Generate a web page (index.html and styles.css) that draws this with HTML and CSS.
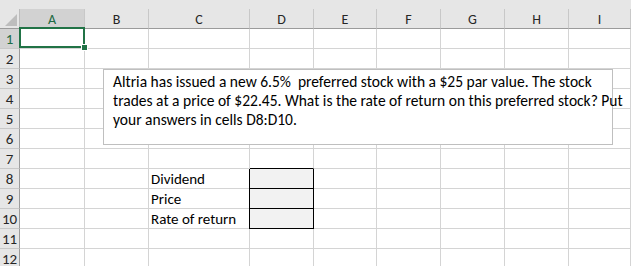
FILE: index.html
```html
<!DOCTYPE html>
<html lang="en">
<head>
  <meta charset="UTF-8">
  <title>Preferred stock</title>
  <link rel="stylesheet" href="styles.css">
</head>
<body>
  <div class="sheet">
    <div class="topband"></div>
    <div class="grid">
      <div class="corner"><span class="tri"></span></div>
      <div class="colhead sel">A</div>
      <div class="colhead">B</div>
      <div class="colhead">C</div>
      <div class="colhead">D</div>
      <div class="colhead">E</div>
      <div class="colhead">F</div>
      <div class="colhead">G</div>
      <div class="colhead">H</div>
      <div class="colhead">I</div>
    </div>
    <div class="grid" id="rows"></div>

    <div class="selection"><span class="handle"></span></div>

    <div class="textbox">
      Altria has issued a new 6.5%&nbsp; preferred stock with a $25 par value. The stock<br>
      trades at a price of $22.45. What is the rate of return on this preferred stock? Put<br>
      your answers in cells D8:D10.
    </div>
  </div>

  <script>
    const labels = { 8: "Dividend", 9: "Price", 10: "Rate of return" };
    const rows = document.getElementById("rows");
    for (let r = 1; r <= 12; r++) {
      let html = `<div class="rowhead${r === 1 ? " sel" : ""}">${r}</div>`;
      for (let c = 0; c < 9; c++) {
        let cls = "cell";
        let text = "";
        if (c === 2 && labels[r]) text = labels[r];
        if (c === 3 && labels[r]) cls += " answer";
        if (c === 3 && r === 7) cls += " above";
        html += `<div class="${cls}">${text}</div>`;
      }
      rows.insertAdjacentHTML("beforeend", html);
    }
  </script>
</body>
</html>
```

FILE: styles.css
```css
body {
  margin: 0;
  width: 631px;
  height: 266px;
  overflow: hidden;
  background: #fff;
  font-family: Carlito, "Liberation Sans", sans-serif;
}
.sheet {
  position: relative;
  height: 266px;
}
.topband {
  height: 9px;
  background: #e6e6e6;
}
.grid {
  display: grid;
  grid-template-columns: 20px 65px 64px 101px 64px 63px 64px 64px 64px 1fr;
}
.corner {
  height: 19px;
  background: #e6e6e6;
  border-right: 1px solid #bcbcbc;
  border-bottom: 1px solid #9b9b9b;
  position: relative;
}
.tri {
  position: absolute;
  right: 2px;
  bottom: 2px;
  width: 0;
  height: 0;
  border-left: 12px solid transparent;
  border-bottom: 12px solid #bdbdbd;
}
.colhead {
  height: 19px;
  line-height: 21px;
  background: #e6e6e6;
  border-right: 1px solid #c8c8c8;
  border-bottom: 1px solid #9b9b9b;
  text-align: center;
  font-size: 14px;
  color: #262626;
}
.colhead.sel {
  background: #d2d2d2;
  color: #1e6b44;
  border-bottom: 1px solid #217346;
}
.rowhead {
  height: 19px;
  line-height: 21px;
  background: #e6e6e6;
  border-right: 1px solid #9b9b9b;
  border-bottom: 1px solid #c8c8c8;
  text-align: center;
  font-size: 15px;
  color: #262626;
}
.rowhead.sel {
  background: #d2d2d2;
  color: #1e6b44;
}
.cell {
  height: 19px;
  line-height: 21px;
  border-right: 1px solid #d4d4d4;
  border-bottom: 1px solid #d4d4d4;
  font-size: 15px;
  color: #000;
  padding-left: 2px;
  white-space: nowrap;
}
.cell.above {
  border-bottom-color: #000;
}
.cell.answer {
  background: #f2f2f2;
  border-bottom: 1px solid #000;
  border-right: 1px solid #000;
  box-shadow: -1px 0 0 #000;
}
.selection {
  position: absolute;
  left: 19px;
  top: 27px;
  width: 62px;
  height: 17px;
  border: 2px solid #217346;
}
.handle {
  position: absolute;
  right: -5px;
  bottom: -5px;
  width: 5px;
  height: 5px;
  background: #217346;
  border: 1px solid #fff;
}
.textbox {
  position: absolute;
  left: 103px;
  top: 69px;
  width: 490px;
  height: 72px;
  padding: 2px 9px 0;
  border: 1px solid #bfbfbf;
  background: #fff;
  font-size: 15.5px;
  line-height: 19px;
  color: #000;
  white-space: nowrap;
}
```
